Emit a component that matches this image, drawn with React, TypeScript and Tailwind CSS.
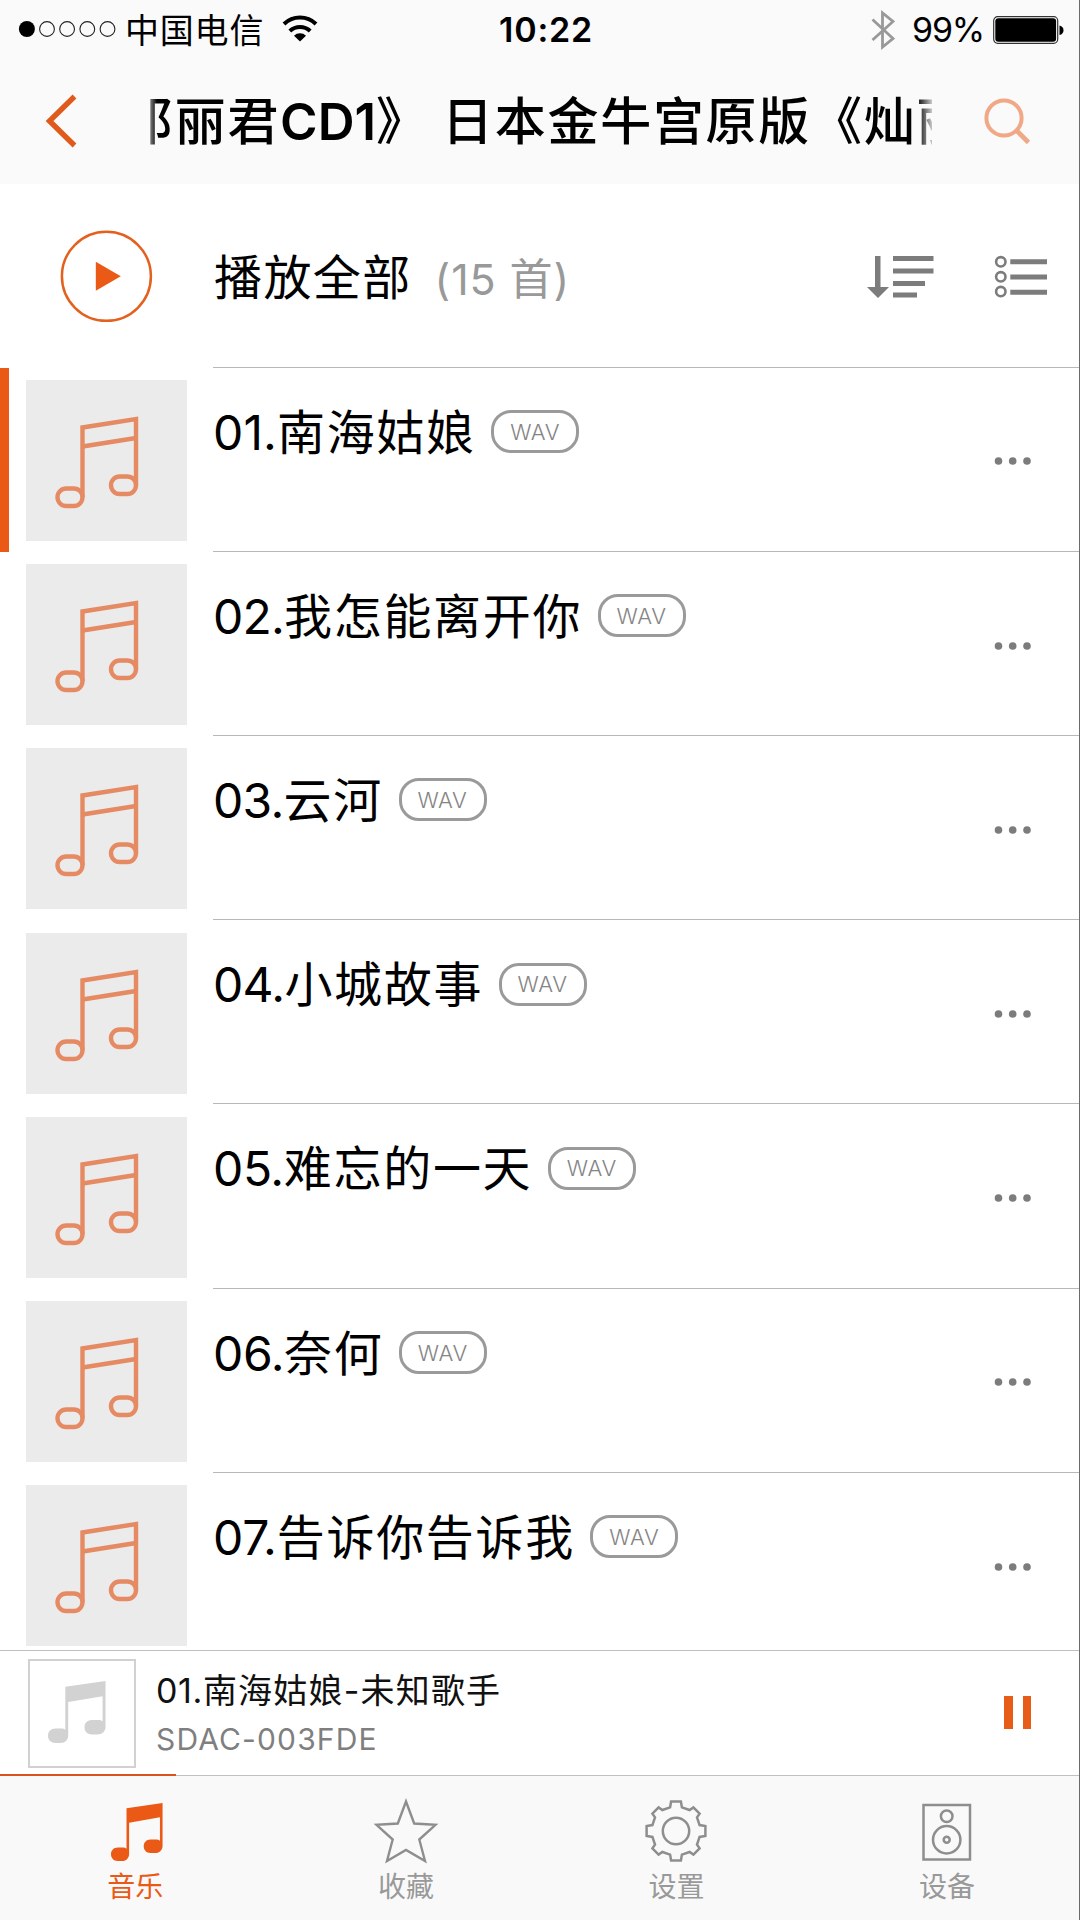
import React from "react";

const songs = [
  { no: "01.", name: "南海姑娘", tracking: "tracking-[0.1px]" },
  { no: "02.", name: "我怎能离开你", tracking: "tracking-[-0.8px]" },
  { no: "03.", name: "云河", tracking: "tracking-[-0.7px]" },
  { no: "04.", name: "小城故事", tracking: "tracking-[-0.7px]" },
  { no: "05.", name: "难忘的一天", tracking: "tracking-[-0.4px]" },
  { no: "06.", name: "奈何", tracking: "tracking-[-0.4px]" },
  { no: "07.", name: "告诉你告诉我", tracking: "tracking-[-0.2px]" },
];

const StatusBar: React.FC = () => (
  <div className="flex h-[60px] items-center">
    <svg className="ml-4 shrink-0" width="102" height="20" viewBox="0 0 102 20">
      <circle cx="10.9" cy="9" r="8" fill="#000" />
      {[31, 51.1, 71.3, 91.5].map((cx) => (
        <circle key={cx} cx={cx} cy="9" r="7.4" fill="none" stroke="#222" strokeWidth="1.1" />
      ))}
    </svg>
    <span className="ml-[7px] mt-px w-[157px] whitespace-nowrap text-[34px] leading-none tracking-[0.8px]">中国电信</span>
    <svg className="-mt-1 shrink-0" width="36" height="28" viewBox="0 0 36 28">
      <g fill="none" stroke="#000" strokeWidth="4">
        <path d="M2 10 A23 23 0 0 1 34 10" />
        <path d="M7.8 17 A15 15 0 0 1 28.2 17" />
      </g>
      <path d="M12 21.7 A8.5 8.5 0 0 1 24 21.7 L18 27.5 Z" />
    </svg>
    <span className="ml-[181px] w-[96px] whitespace-nowrap text-[34px] font-semibold leading-none tracking-[0.8px]">10:22</span>
    <svg className="ml-[276px] shrink-0" width="24" height="40" viewBox="0 0 24 40">
      <path d="M1.5 9.5 L22 28.5 L11.5 37 V3 L22 11.5 L1.5 30" fill="none" stroke="#999" strokeWidth="2.8" />
    </svg>
    <span className="ml-[17px] w-[81px] whitespace-nowrap text-[34px] leading-none tracking-[-1.2px]">99%</span>
    <svg className="-mt-px shrink-0" width="72" height="28" viewBox="0 0 72 28">
      <rect x="0.7" y="0.7" width="64" height="26.6" rx="4" fill="#fff" stroke="#333" strokeWidth="1.2" />
      <rect x="2.3" y="2.3" width="60.8" height="23.4" rx="3" />
      <path d="M66.5 9.5 Q70.5 10.5 70.5 14.2 Q70.5 18 66.5 19 Z" />
    </svg>
  </div>
);

const TitleBar: React.FC = () => (
  <div className="flex h-[124px] items-center">
    <svg className="-mt-[3px] ml-[43px] shrink-0" width="36" height="56" viewBox="0 0 36 56">
      <path d="M31.5 3.5 L6.5 28 L31.5 52.5" fill="none" stroke="#e05a1c" strokeWidth="5.4" />
    </svg>
    <div className="ml-[70px] flex w-[783px] justify-start overflow-hidden whitespace-nowrap text-[51px] font-medium leading-[76px] [mask-image:linear-gradient(to_right,rgba(0,0,0,0.4),#000_8px,#000_768px,rgba(0,0,0,0.2))]">
      <span className="-ml-[27px] tracking-[1.7px]">邓丽君</span>
      <span className="font-semibold">CD1</span>
      <span className="w-[69px]">》</span>
      <span className="ml-[15px] tracking-[1.7px]">日本金牛宫原版《灿丽</span>
    </div>
    <svg className="ml-[51px] shrink-0" width="50" height="50" viewBox="0 0 50 50">
      <g fill="none" stroke="#f0a886" strokeWidth="4">
        <circle cx="21" cy="21" r="17.6" />
        <path d="M33.5 33.5 L45.5 45.5" strokeWidth="4.6" />
      </g>
    </svg>
  </div>
);

const PlayAll: React.FC = () => (
  <div className="flex h-[182.6px] items-center">
    <svg className="ml-[59px] mt-[2px] shrink-0" width="94" height="94" viewBox="0 0 94 94">
      <circle cx="47.4" cy="47.3" r="44.5" fill="none" stroke="#e4601f" strokeWidth="2.5" />
      <path d="M36.8 32.8 L61.8 47.3 L36.8 61.8 Z" fill="#ea5a16" />
    </svg>
    <span className="ml-[61px] mt-[6px] whitespace-nowrap text-[48px] leading-none tracking-[1.4px]">播放全部</span>
    <span className="ml-[23px] mt-[8px] w-[340px] whitespace-nowrap text-[43px] leading-none tracking-[0.9px] text-[#999]">
      (15 首)
    </span>
    <svg className="ml-auto mt-[4px] shrink-0" width="68" height="44" viewBox="0 0 68 44" fill="#7c7c7c">
      <path d="M8 1 H13.5 V32 H22 L11 43 L0 32 H8 Z" />
      <path d="M26 1 H66.5 V6 H26 Z M26 13.5 H66.5 V18.5 H26 Z M26 26 H58 V31 H26 Z M26 37.5 H50 V42.5 H26 Z" />
    </svg>
    <svg className="ml-[59px] mr-[29px] mt-[4px] shrink-0" width="56" height="44" viewBox="0 0 56 44">
      <g fill="none" stroke="#7c7c7c" strokeWidth="2.6">
        <circle cx="6.8" cy="6.8" r="4.7" />
        <circle cx="6.8" cy="21.8" r="4.7" />
        <circle cx="6.8" cy="36.6" r="4.7" />
      </g>
      <path d="M16.3 4.3 H53 V9.3 H16.3 Z M16.3 19.5 H53 V24.5 H16.3 Z M16.3 34.7 H53 V39.7 H16.3 Z" fill="#7c7c7c" />
    </svg>
  </div>
);

const Cover: React.FC = () => (
  <div className="mt-[13.4px] h-[161px] w-[161px] shrink-0 bg-[#ebebeb]">
    <svg width="161" height="161" viewBox="0 0 161 161" fill="none" stroke="#e58a62" strokeWidth="4.4">
      <path d="M56.5 117 V47.5 L110 39 V105" />
      <path d="M56.5 66.5 L110 58" />
      <rect x="31.5" y="108.5" width="25" height="17.5" rx="8.7" />
      <rect x="85" y="96.5" width="25" height="17.5" rx="8.7" />
    </svg>
  </div>
);

type SongRowProps = {
  no: string;
  name: string;
  tracking: string;
  active: boolean;
};

const SongRow: React.FC<SongRowProps> = ({ no, name, tracking, active }) => (
  <li className="flex h-[184.2px] shrink-0">
    <div className={active ? "-mb-px mr-[17px] mt-[1.4px] w-[9px] bg-[#ea5a16]" : "mr-[17px] w-[9px]"} />
    <Cover />
    <div className="ml-[26px] flex flex-1 border-t border-[#b8b8b8]">
      <div className="mt-[35px] flex h-[60px] items-center whitespace-nowrap text-[48px] leading-none">
        <span className={tracking}>{no}</span>
        <span className="tracking-[1.7px]">{name}</span>
        <span className="-mt-[2px] ml-[15.5px] flex h-[43px] w-[88px] items-center justify-center rounded-[20px] border-[3px] border-[#9a9a9a] text-[22px] font-light tracking-[0.7px] text-[#858585]">
          WAV
        </span>
      </div>
      <svg className="ml-auto mr-[46px] mt-[87.8px]" width="40" height="12" viewBox="0 0 40 12" fill="#7c7c7c">
        <circle cx="5.5" cy="6" r="3.8" />
        <circle cx="19.7" cy="6" r="3.8" />
        <circle cx="34" cy="6" r="3.8" />
      </svg>
    </div>
  </li>
);

const SolidNote: React.FC<{ className: string }> = ({ className }) => (
  <svg className={className} viewBox="0 0 58 62" preserveAspectRatio="none" fill="currentColor">
    <path d="M17.3 5.7 L57.5 0 V46 C57.5 50.5 54 53.5 49.5 53.5 H44 C39.5 53.5 36.5 50.5 36.5 46.3 C36.5 42 39.5 39 44 39 H50 C52 39 53.5 39.5 54.6 40.4 V15.3 L20.2 21 V54.5 C20.2 59 17 62 12.5 62 H7.5 C3 62 0 59 0 54.8 C0 50.6 3 47.6 7.5 47.6 H13 C15 47.6 16.3 48 17.3 48.8 Z" />
  </svg>
);

const MiniPlayer: React.FC = () => (
  <div className="relative flex h-[126px] shrink-0 items-start border-y border-[#c0c0c0] bg-white">
    <div className="ml-[28px] mt-[8px] h-[109px] w-[108px] border-2 border-[#d2d0d3] pl-[18px] pt-[20px] text-[#d2d2d2]">
      <SolidNote className="h-[62px] w-[58px]" />
    </div>
    <div className="ml-[20px] mt-[19px] whitespace-nowrap">
      <div className="text-[34px] leading-[42px] text-[#111]">
        <span className="tracking-[0.6px]">01.</span>
        <span className="tracking-[1.2px]">南海姑娘-未知歌手</span>
      </div>
      <div className="mt-[8px] text-[30px] leading-[38px] tracking-[1.15px] text-[#7f7f7f]">SDAC-003FDE</div>
    </div>
    <div className="ml-auto mr-[48px] mt-[45px] flex h-[33px] gap-[10px]">
      <div className="w-[8.5px] bg-[#e65c18]" />
      <div className="w-[8.5px] bg-[#e65c18]" />
    </div>
    <div className="absolute -bottom-px left-0 h-[2px] w-[176px] bg-[#d9531e]" />
  </div>
);

// gear outline around (31, 31): wide teeth on the axes, narrow ones between
const gearPath = Array.from({ length: 8 }, (_, i) => {
  const at = (deg: number, r: number) => {
    const a = ((i * 45 + deg) * Math.PI) / 180;
    return `${(31 + r * Math.sin(a)).toFixed(1)} ${(31 - r * Math.cos(a)).toFixed(1)}`;
  };
  return i % 2 === 0
    ? `L${at(-14, 24.3)} L${at(-9.5, 29.8)} L${at(9.5, 29.8)} L${at(14, 24.3)}`
    : `L${at(-12, 25)} L${at(-8.5, 29.3)} L${at(8.5, 29.3)} L${at(12, 25)}`;
})
  .join(" ")
  .replace("L", "M");

const tabs = [
  { label: "音乐", icon: <SolidNote className="ml-[3px] mt-px h-[58px] w-[52px]" /> },
  {
    label: "收藏",
    icon: (
      <svg className="h-[66px] w-[66px]" viewBox="0 0 66 66" fill="none" stroke="#8e8e8e" strokeWidth="2.4">
        <path d="M33 3.5 L41.2 25.5 L62.5 26.8 L46.3 41.5 L52 63 L33 52 L14 63 L19.7 41.5 L3.5 26.8 L24.8 25.5 Z" />
      </svg>
    ),
  },
  {
    label: "设置",
    icon: (
      <svg className="-ml-px h-[62px] w-[62px]" viewBox="0 0 62 62" fill="none" stroke="#8e8e8e" strokeWidth="2.5">
        <path d={gearPath + " Z"} />
        <circle cx="31" cy="31" r="13.2" />
      </svg>
    ),
  },
  {
    label: "设备",
    icon: (
      <svg className="mt-px h-[60px] w-[50px]" viewBox="0 0 50 60" fill="none" stroke="#8e8e8e" strokeWidth="2.5">
        <rect x="1.5" y="3" width="46.5" height="54.5" />
        <circle cx="24.7" cy="14.2" r="5.8" />
        <circle cx="24.7" cy="37.8" r="13.7" />
        <circle cx="24.7" cy="37.8" r="3" />
      </svg>
    ),
  },
];

const App: React.FC = () => (
  <div className="flex h-[1920px] w-[1080px] flex-col overflow-hidden border-r border-[#6b6b6b] bg-white font-[Inter,'Noto_Sans_CJK_SC',sans-serif] text-black">
    <header className="h-[184px] shrink-0 bg-[#fafafa]">
      <StatusBar />
      <TitleBar />
    </header>
    <PlayAll />
    <ul className="flex h-0 flex-1 flex-col overflow-hidden">
      {songs.map((song, i) => (
        <SongRow key={song.no} {...song} active={i === 0} />
      ))}
    </ul>
    <MiniPlayer />
    <nav className="grid h-[144px] shrink-0 grid-cols-[repeat(4,270.6px)] bg-[#f9f9f9]">
      {tabs.map((tab, i) => (
        <div
          key={tab.label}
          className={`flex flex-col items-center text-[28px] ${i === 0 ? "text-[#ea5a16]" : "text-[#999]"}`}
        >
          <div className="mt-[22px] flex h-[66px] items-center">{tab.icon}</div>
          <span className="mt-[6px] leading-[34px]">{tab.label}</span>
        </div>
      ))}
    </nav>
  </div>
);

export default App;
